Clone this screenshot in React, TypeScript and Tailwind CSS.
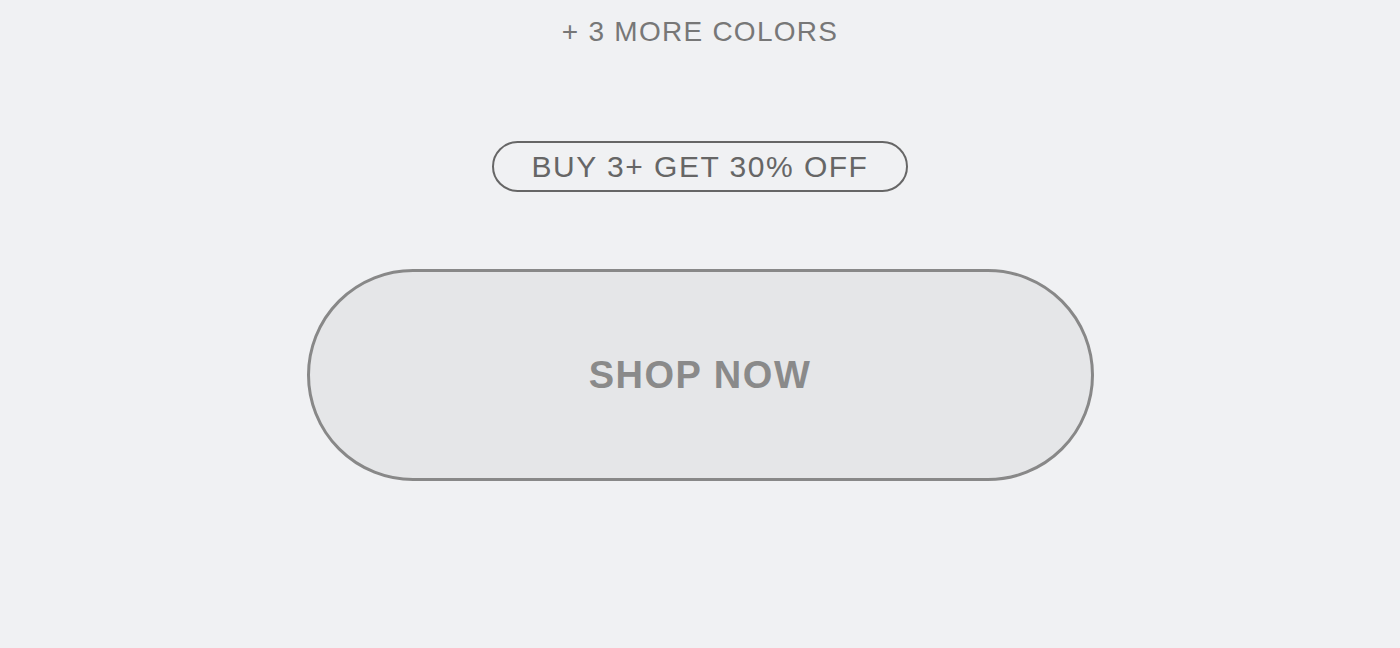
export default function App() {
  return (
    <div className="min-h-screen bg-[#f0f1f3] flex flex-col items-center font-['Liberation_Sans',Arial,sans-serif]">
      <p className="mt-[15px] text-[28px] leading-[34px] tracking-[0.045em] text-[#777]">+ 3 MORE COLORS</p>

      <div className="mt-[92px] h-[51px] w-[416px] rounded-full border-2 border-[#666] flex items-center justify-center">
        <span className="text-[30px] tracking-[0.05em] text-[#666]">BUY 3+ GET 30% OFF</span>
      </div>

      <button className="mt-[77px] h-[212px] w-[787px] rounded-full border-[3px] border-[#888] bg-[#e5e6e8] flex items-center justify-center">
        <span className="text-[38px] font-bold tracking-[0.04em] text-[#8a8a8a]">SHOP NOW</span>
      </button>
    </div>
  )
}
